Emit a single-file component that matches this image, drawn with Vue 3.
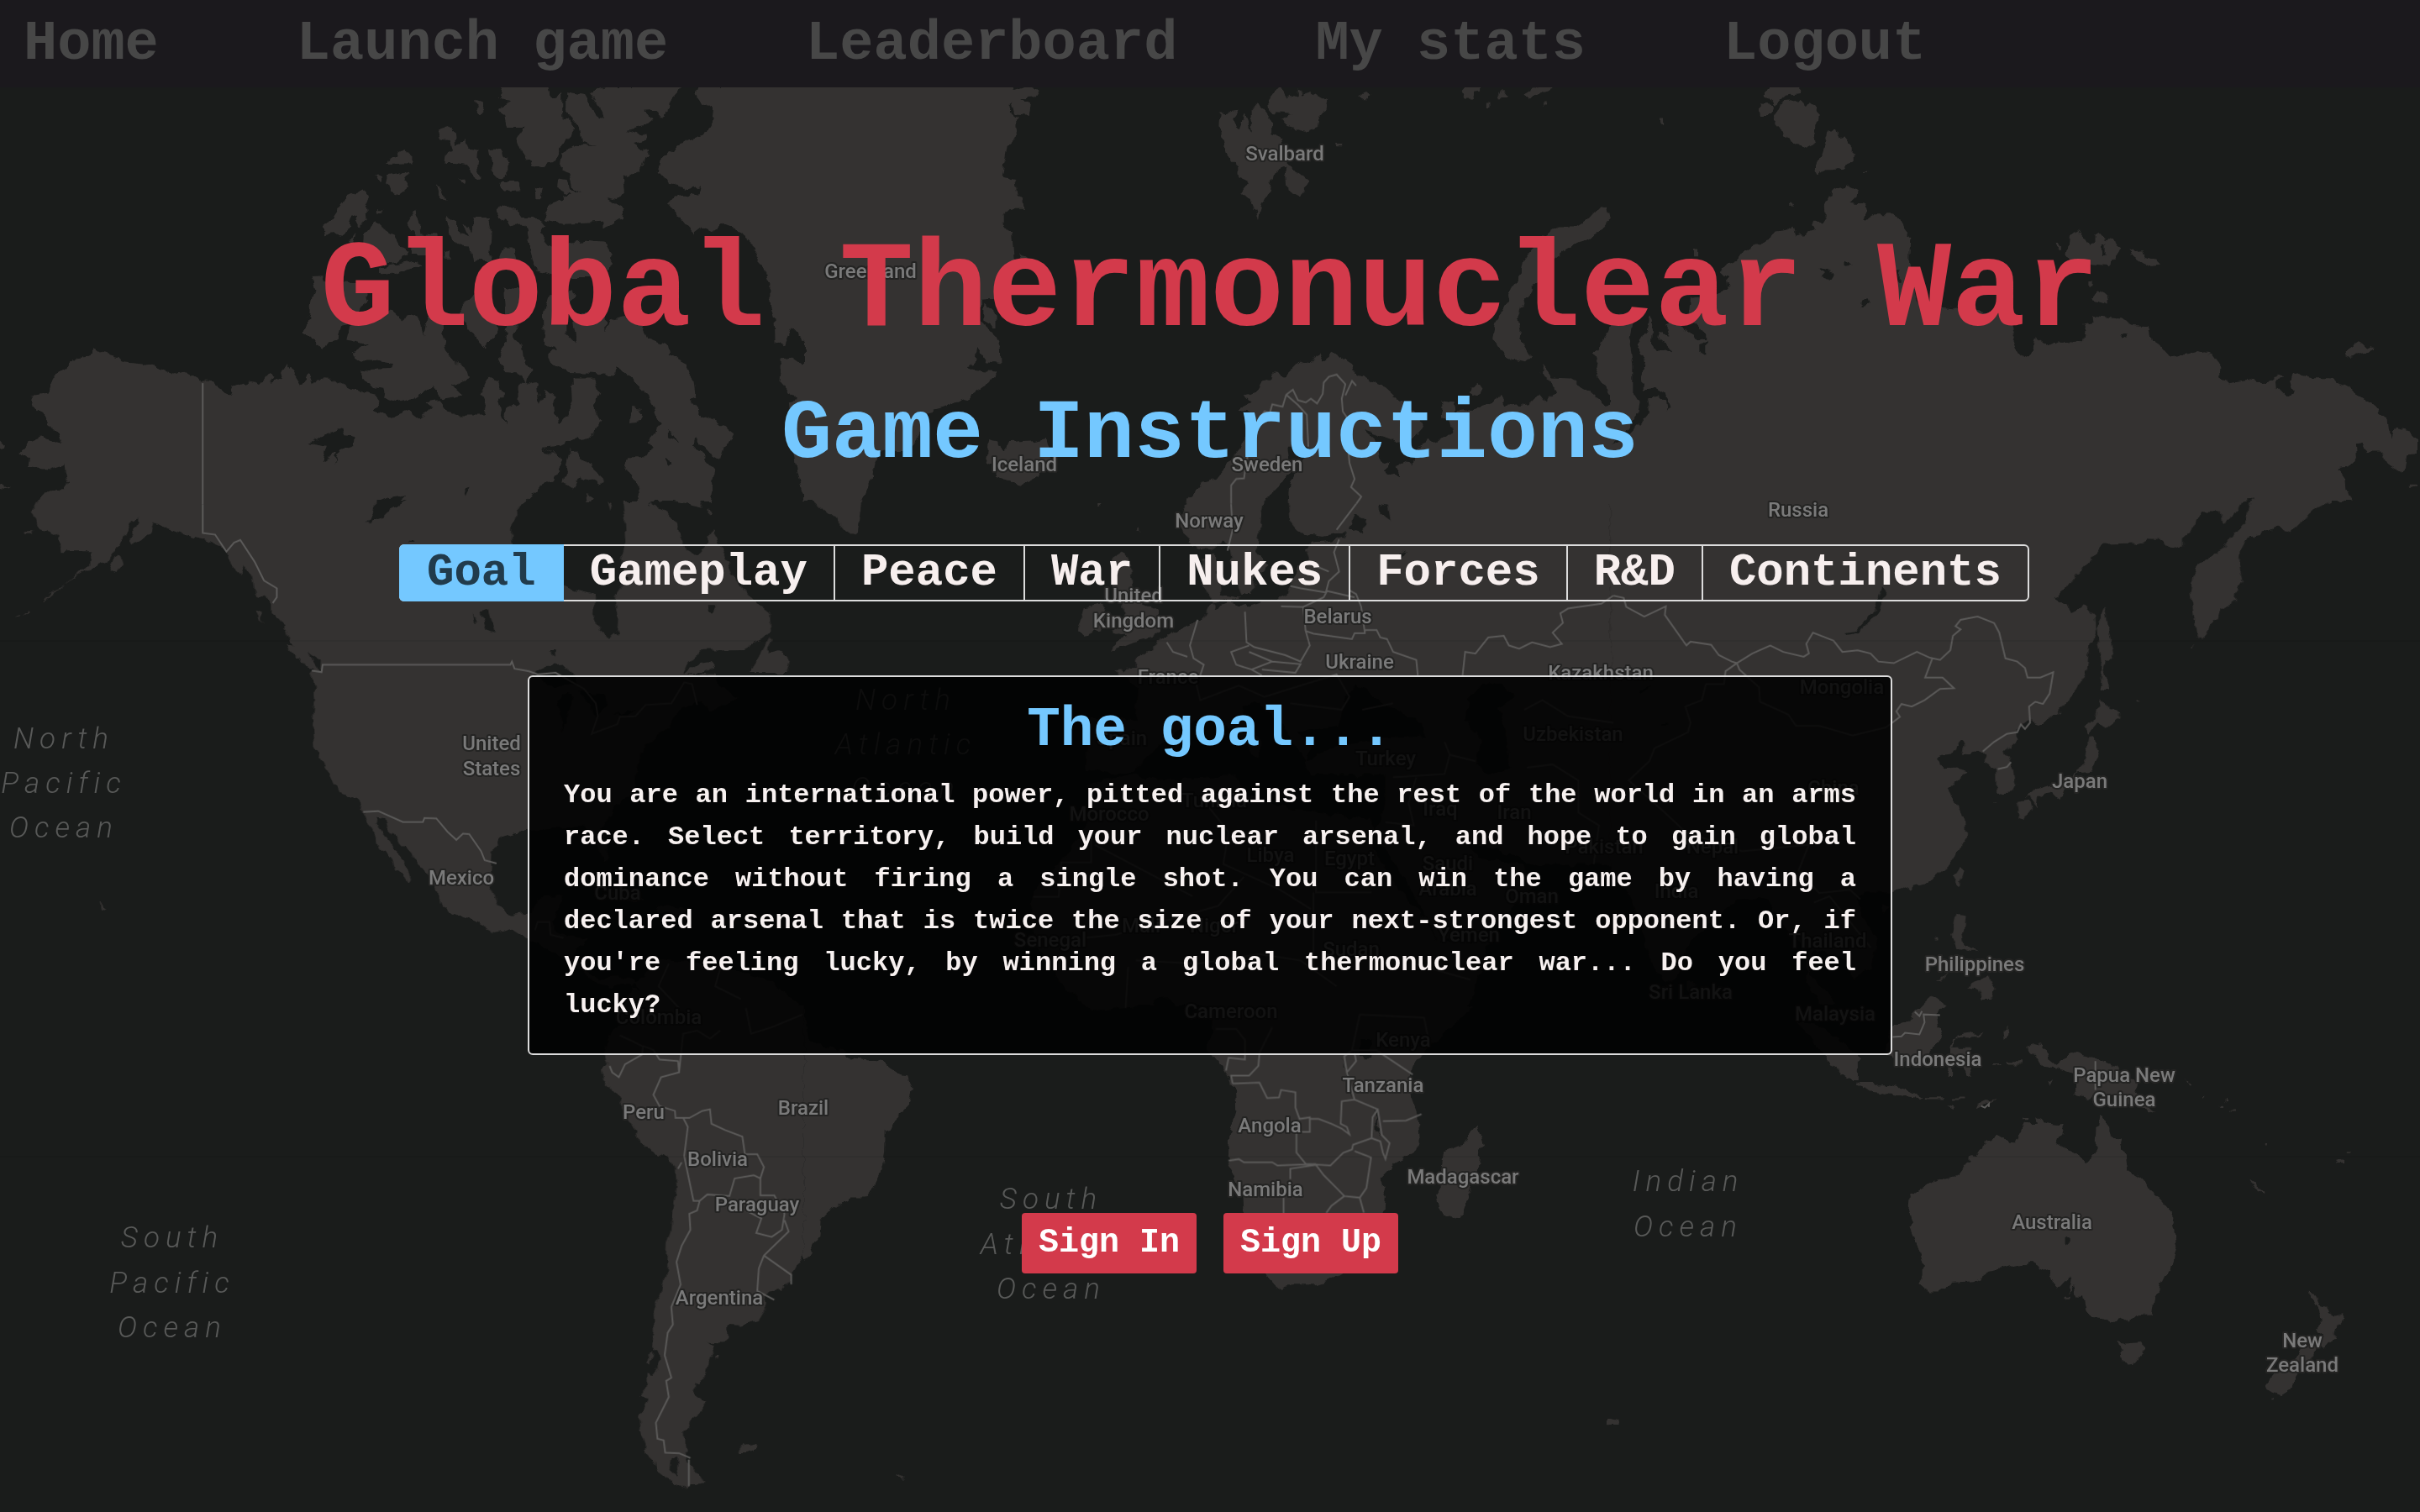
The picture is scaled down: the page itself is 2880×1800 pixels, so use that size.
<script setup>
import { ref, computed } from 'vue'

const navLinks = ['Home', 'Launch game', 'Leaderboard', 'My stats', 'Logout']
const tabs = ['Goal', 'Gameplay', 'Peace', 'War', 'Nukes', 'Forces', 'R&D', 'Continents']
const activeTab = ref('Goal')

const sections = {
  Goal: {
    heading: 'The goal...',
    text: "You are an international power, pitted against the rest of the world in an arms race. Select territory, build your nuclear arsenal, and hope to gain global dominance without firing a single shot. You can win the game by having a declared arsenal that is twice the size of your next-strongest opponent. Or, if you're feeling lucky, by winning a global thermonuclear war... Do you feel lucky?"
  }
}
const section = computed(() => sections[activeTab.value] ?? sections.Goal)

// World map, split in a 3 x 3 grid of tiles; every tile has its own 1568-unit coordinate space.
const tiles = [
  {
    col: 0, row: 0,
    land: `M985 272L975 310L998 322L975 345L985 370L990 405L1025 405L1010 440L1020 480L1040 525L1060 528L1078 515L1092 470L1110 440L1124 410L1112 380L1098 375V290L1088 315L1075 318L1070 272Z
    M1106 295L1140 305L1165 370L1183 378L1168 340L1150 295L1188 272H1332L1320 300L1308 320L1306 360L1292 373L1278 350L1258 352L1275 380L1260 400L1225 412L1260 430L1262 445L1240 455L1263 480L1250 540L1215 560L1218 600L1205 630L1185 622L1202 640L1218 660L1210 690L1180 720V700L1100 705L1060 690L1070 650L1090 630L1112 612L1088 590L1090 565L1105 570L1115 600L1140 610L1120 595L1112 545L1095 535L1100 480L1120 462L1165 465L1135 455L1130 400L1106 360Z
    M1362 272L1355 300L1365 325L1395 345L1392 380L1375 430L1335 450L1290 500L1285 540L1305 575L1340 600L1368 588L1365 612L1320 618L1305 645L1325 680L1340 710L1355 735L1372 715L1390 730L1410 705L1435 720L1450 745L1475 780L1472 810L1490 840L1500 890L1500 950L1510 1000L1512 1075L1530 1085L1545 1030L1568 1070V272Z
    M1520 1125L1545 1120L1568 1145V1250L1555 1255L1535 1215L1518 1200L1520 1160Z M1540 1260L1568 1250V1550L1555 1480L1548 1400Z
    M930 318L942 325L945 350L937 365L930 340Z M858 415L875 405L890 425L892 460L908 440L915 470L935 475L932 520L942 560L930 570L912 520L890 515L868 515L870 485L885 475L880 445L860 440Z
    M790 475L806 492V518L760 520L765 500Z M735 550L748 560L745 578Z M760 555L800 543L788 570L797 590L778 614L765 605L758 575Z
    M955 470L978 475L992 515V555L975 565L962 545L960 510Z M980 575L1012 575L1015 600L985 603L978 590Z M1045 590L1060 598L1055 625L1046 625Z M852 580L865 600L873 635L860 625Z M897 568L912 566L908 582Z M738 662h12v8h-12z
    M710 600L722 615L715 645L718 690L705 712L698 690L690 675L675 740L655 735L637 740L633 710L650 690L680 620Z M698 730L690 770L680 770Z
    M735 695L755 725L770 740L782 775L800 790L770 830L720 820L710 782L712 740Z M812 665L820 700L822 735L855 738L857 800H805L808 735L795 705Z M868 790h12v25h-12z
    M872 682L890 700L900 738L915 742L905 700L922 730L925 685L955 685L960 720L958 790L955 820L925 822L920 775L895 772L880 735Z
    M972 655L990 645L1010 660L1020 685L1050 685L1065 715L1055 735L1070 770L1100 785L1112 765L1150 755L1180 760L1195 800L1190 850L1160 870L1100 870L1045 850L1035 780L1025 710L1000 710L975 685Z
    M985 775L1005 775L1012 820L1010 850L980 840L976 815Z M745 840L810 820L825 830L770 865L745 860Z
    M612 870L635 868L640 885L715 890L720 930L700 985L690 1010L668 1020L662 1065L645 1070L632 1100L612 1065L594 1040L608 980L610 940L618 915Z
    M700 985L750 985L762 972L790 1010L800 985L822 1000L828 1060L835 1000L850 960L862 985L865 1050L872 1100L890 1135L915 1165L918 1185L885 1210L905 1240L865 1250L845 1210L810 1245L775 1258L755 1245L750 1220L730 1215L705 1170L720 1158L765 1155L770 1140L740 1130L700 1130L692 1110L720 1080L680 1065L690 1000Z
    M895 985L940 890L975 985L970 1050L945 1088L925 1045Z M985 900L1020 910L1050 905L1030 985L1012 1010L1000 1050L1020 1080L1025 1130L1038 1155L1030 1195L1015 1170L985 1165L975 1130L985 1080L990 1030Z
    M1060 990L1070 930L1120 915L1108 985L1108 1050L1125 1078L1118 1020L1115 985L1180 985L1182 1040L1190 1005L1225 992L1250 1005L1262 1055L1300 1080L1305 1110L1340 1140L1345 1170L1355 1190L1358 1240L1345 1250L1370 1300L1410 1330L1433 1360L1425 1385L1412 1400L1405 1440L1385 1420L1355 1370L1350 1390L1395 1470L1393 1500L1388 1568H1370L1340 1510L1375 1568H1250L1245 1520L1230 1480L1215 1450L1225 1430L1265 1430L1275 1400L1265 1380L1290 1330L1280 1290L1265 1240L1235 1190L1205 1150L1200 1175L1155 1170L1110 1168L1075 1135L1070 1110L1085 1095L1062 1080Z
    M190 1088L205 1105L240 1120L245 1135L290 1142L340 1172L365 1165L395 1192L420 1195L425 1218L452 1238L458 1215L490 1195L510 1205L530 1168L540 1175L530 1200L550 1180L565 1142L590 1208L605 1170L612 1208L625 1185L650 1190L690 1220L735 1238L745 1260L730 1285L770 1305L800 1285L820 1310L845 1275L830 1260L860 1255L880 1300L945 1300L950 1265L940 1230L955 1180L975 1195L985 1235L975 1260L985 1325L990 1280L1012 1260V1215L1030 1190L1050 1210L1055 1265L1065 1220L1080 1240L1085 1295L1095 1325L1108 1300L1120 1260L1118 1185L1160 1185L1170 1230L1160 1270L1172 1320L1150 1375L1125 1370L1095 1395L1060 1400L1100 1440L1080 1500L1055 1520L1027 1568H80L90 1535L130 1535L135 1500L130 1455L100 1470L60 1460L62 1435L45 1415L60 1385L85 1368L127 1390L120 1355L98 1330L95 1310L65 1268L68 1243L100 1235L110 1180L150 1122L180 1118Z
    M1100 1510L1115 1400L1140 1440L1180 1500L1170 1515L1135 1490L1120 1530Z M1232 1275L1252 1280L1250 1320L1230 1325Z M1145 1545L1162 1550L1155 1568H1140Z M0 1365L15 1390L0 1410Z M0 1510L28 1530L0 1525Z`,
    water: `M603 1385L670 1342L675 1365L695 1370L693 1395L670 1405L655 1445L660 1415L630 1445L640 1395Z M905 1525L918 1520L910 1550Z M745 1568L760 1558L795 1550L780 1568Z M1296 1435L1312 1450L1300 1460Z M1305 1345L1325 1385L1305 1370Z M1060 1400L1082 1425L1065 1420Z`,
    borders: 'M394 1192V1568'
  },
  {
    col: 1, row: 0,
    land: `M0 272H405L408 290L435 275L458 290L450 310L420 312L440 330L435 365L408 362L402 325L400 360L412 375L413 435L395 460L385 560L410 570L415 620L425 625L427 655L400 655L385 680L385 710L405 730L410 830L395 870L400 910L390 935L345 940L340 1000L370 1050L382 1090L383 1140L355 1135L335 1090L333 1125L320 1155L375 1165L355 1205L320 1245L265 1280L240 1290L230 1340L205 1410L150 1413L135 1450L130 1500L110 1568H0Z
    M420 795L437 815L425 822Z M350 950L375 990L375 1028L350 1005Z
    M808 360L845 352L835 375L845 410L857 362L870 430V350L880 330L895 350L910 390V430L930 440L940 500L935 530L912 545L905 600L890 640L882 685L870 640L850 610L865 575L845 560L843 530L825 500L815 440L806 400Z M935 505L960 545L980 570L965 620L940 600Z
    M925 272L938 310L945 300L960 308V280L968 308L985 290L1018 320L1015 350L1000 380L998 405L975 420L940 405L925 375L950 360L905 355L903 320Z M1080 310L1092 293L1102 300L1090 320Z M1036 455h8v8h-8z
    M1280 290L1290 272H1315V292L1300 295L1302 315L1285 315Z M1358 288L1368 308L1350 310Z M1400 300L1425 275L1468 272L1430 300L1410 318Z M1436 328h8v8h-8z M1326 328h6v12h-6z
    M1545 655L1560 652L1565 690L1550 725L1480 785L1455 820L1430 880L1400 940L1388 1000L1392 1060L1415 1120L1405 1135L1375 1128L1350 1090L1338 1060L1345 1010L1360 970L1375 900L1395 860L1400 820L1430 750L1465 715L1500 715L1525 690Z
    M360 1375L375 1380L388 1410L400 1385L450 1380L470 1372L478 1400L480 1440L455 1490L420 1520L395 1500L370 1495L375 1460L352 1450L355 1420Z
    M1000 1105L1010 1130L1030 1105L1065 1140L1068 1165L1095 1190L1130 1215L1165 1265L1200 1320L1205 1340L1185 1375L1150 1380L1090 1345L1110 1375L1120 1440L1140 1450L1125 1470L1160 1498L1148 1465L1165 1440L1185 1458L1190 1410L1215 1370L1230 1385L1260 1350L1255 1320L1240 1300L1238 1255L1262 1260L1265 1290L1290 1285L1340 1258L1355 1240L1365 1270L1412 1260L1428 1235L1440 1260L1460 1230L1455 1200L1432 1170L1435 1145L1455 1185L1490 1188L1520 1215L1560 1270L1568 1265V1568H942L945 1510L970 1440L985 1400H940L945 1470L925 1520L895 1568H745L775 1510L800 1500L830 1440L850 1400L860 1340L870 1290L840 1285L870 1260L858 1240L880 1230L890 1200L920 1165L935 1180L965 1130L985 1140Z
    M1298 1210L1310 1202L1320 1225L1305 1245L1295 1235Z M1560 1050L1568 1020V1240L1550 1200L1540 1180L1545 1150L1535 1110Z`,
    water: '',
    borders: `M825 1568V1510L835 1490L850 1488L855 1430L875 1340L880 1300L890 1280L900 1285L905 1258L925 1265L932 1228L945 1212L955 1245L970 1252L980 1240L992 1255L1003 1225L1005 1190L1015 1172L1030 1165L1047 1195L1040 1240L1042 1280L1055 1310L1050 1360L1055 1440L1065 1490L1058 1515L1078 1545L1068 1568 M932 1228L955 1260L972 1290L975 1390 M1047 1230L1060 1185L1068 1200`
  },
  {
    col: 2, row: 0,
    land: `M315 272H368V300L340 308L325 330L318 330L298 300Z M290 330L318 335L312 366L292 366Z M335 325L372 316L378 350L388 330L402 345L400 390L397 430L400 455L380 470L350 445L335 435L330 400L318 380Z
    M437 403L445 440L455 435L470 470V515L440 535L415 537L400 556L396 545L412 470L422 420Z M95 380h8v9h-8z M165 783h5v20h-5z M348 642h6v8h-6z M492 538h8v3h-8z
    M457 584L480 600L478 620L465 640L495 645L498 665L490 692L505 690L508 675H548L566 690L570 720L582 745L580 830L600 960L650 965L780 985L785 1030L778 1050L790 1100L808 1124L818 1100L828 1055L850 1085L868 1070L920 1075L922 1040L917 1015L940 1008L938 990L985 998L1015 1022L1045 1025L1050 1065L1070 1085L1088 1120L1140 1103L1170 1112L1183 1140V1185L1200 1200L1240 1192L1275 1200L1295 1172L1307 1185L1293 1190L1295 1215L1312 1243L1328 1225L1320 1195L1325 1168L1360 1182L1397 1182L1430 1210L1465 1250L1510 1310L1513 1350L1520 1370L1525 1340L1555 1350L1568 1370V1418L1547 1420L1543 1470L1535 1478L1510 1450L1498 1415L1470 1415L1460 1385L1450 1390L1452 1430L1435 1458L1413 1465L1428 1500L1430 1530L1440 1568H0V1390L30 1370L60 1320L75 1290L72 1245L95 1235L105 1255L107 1290L115 1270L105 1235L85 1215L62 1225L60 1170L67 1135L52 1080L70 1035L75 985L82 1020L80 1080L85 1092L120 1107L112 1090L92 1060L95 1040L115 1050L105 1020L120 1010L150 1030L165 1060L187 1065L172 1085V1105L185 1118V1050L172 1025L150 1010L155 935L185 930L228 910L225 870L215 855L225 835L245 820L260 785L310 755L315 735L345 728L355 715L360 740L380 735L397 722L392 700L410 700L418 680L416 650L430 605Z
    M0 985L45 990L37 1080L43 1140V1230L55 1260L50 1300L30 1350L0 1390Z
    M908 722L922 745L932 770L940 765V740L948 732L960 752L975 755L992 775L985 800L970 832L955 830L925 825L905 838L892 820L886 800L892 745Z M1008 783L1020 792L1035 790L1042 805L1063 815V835L1045 840L1025 820L1008 800Z M867 768h5v18h-5z M930 883h7v18h-7z M950 910L968 935V955L935 940Z
    M1455 1072L1478 1090L1468 1105L1432 1118L1430 1100Z M1553 1515h15v8h-15z`,
    water: `M408 842L438 855L428 880L410 870Z M455 815L468 835L455 838Z M990 1055L1002 1045L1004 1060L995 1065Z M1228 1562L1248 1556L1244 1568H1230Z M553 850h10v30h-10z M485 960L500 935L508 955Z M957 765h6v45h-6z`,
    borders: ''
  },
  {
    col: 0, row: 1,
    land: `M78 0L68 30L80 80L120 110L125 155L183 155L180 195L150 235L100 300L88 312L100 290L140 250L175 215L215 190L240 130L260 60L275 50L275 70L255 120L265 135L300 100L305 65L330 85L365 105L400 118L445 150L455 200L475 230L480 195L495 235L500 290L520 300L533 315L533 350L545 365L562 400L570 440L580 450L562 450L600 515L615 520L608 535L615 570L617 620L612 700L615 765L637 820L655 880L665 905L700 930L715 980L735 1040L740 1080L765 1105L772 1140L790 1160L800 1185L804 1175L790 1120L775 1085L755 1040L735 1000L738 982L755 985L760 1020L805 1100L808 1115L835 1155L845 1190L858 1215L860 1250L885 1285L920 1300L972 1345L1000 1332L1028 1360L1070 1395L1130 1450L1160 1500L1190 1510L1215 1495L1250 1520L1240 1490L1205 1480L1160 1485L1125 1430L1120 1390L1145 1360L1090 1345L1080 1310L1100 1225L1050 1230L1040 1280L1000 1288L975 1260L958 1190L962 1090L975 1050L1005 1028L1070 1020L1140 1010L1165 1060L1180 1130L1190 1110L1175 1020L1200 950L1240 890L1245 820L1260 760L1310 700L1320 650L1370 620L1385 655L1440 610L1400 570L1390 540L1335 533L1345 500L1370 462L1450 460L1490 425L1505 400L1503 350L1480 320L1450 270L1430 230L1408 150L1388 88L1380 130L1360 170L1340 150L1325 100L1320 60L1285 20L1265 0H1215L1220 60L1222 130L1210 180L1225 240L1200 300L1208 370L1205 410L1190 428L1170 400L1160 350L1162 290L1100 265L1060 230L1020 190L1000 130L1000 80L1010 30L1027 0Z
    M1220 1568L1240 1500L1290 1425L1400 1445L1500 1490L1560 1568Z M1462 533L1475 500L1500 425L1505 440L1495 470L1520 460L1540 495L1535 533Z M1335 533L1365 505L1385 500L1395 515L1375 533Z
    M52 92h18v12h-18z M240 170L245 190L230 222L218 215L225 185Z M60 338L62 345L52 352Z M35 362L46 348L44 360Z M500 335L512 345L515 382Z M200 1250L212 1262L203 1272Z M1150 1190L1210 1210L1262 1245L1225 1248Z M1280 1255L1340 1270L1330 1285L1285 1280Z M1188 0L1197 5L1193 30Z M1315 0H1365L1372 20Z M1383 28h5v12h-5z`,
    water: `M735 0H795L762 25L750 50L715 67L730 40Z M940 345L955 340L962 375L968 410L950 400Z M923 355L932 365L928 382Z M1380 325L1400 325L1395 338L1382 338Z M1075 468L1084 468L1080 487Z M1040 535L1070 512L1095 508L1110 520L1130 575L1070 570Z M1090 620L1110 590L1120 605L1100 715Z M1130 590L1180 600L1185 630L1165 670Z M1195 665L1240 650L1230 665Z M603 470L630 500L628 530Z M800 122h10v6h-10z`,
    borders: `M394 0V90L418 95L440 148L455 120L467 112L495 180L513 238L538 262V290L530 308 M606 518L625 523L627 500H992L995 490L1000 512L1028 520L1045 530L1080 525L1135 575L1158 620L1162 660L1150 715L1200 685L1205 662L1235 660L1255 625L1305 620L1330 555L1345 560L1355 625 M706 958L735 955L783 989H822L825 977L848 978L870 1020L887 1045L900 1025L912 1027L935 1080L942 1108L965 1118 M1040 1325L1045 1300H1068L1070 1340L1095 1350 M1400 1445L1390 1500L1440 1540 M1300 1430L1280 1500L1320 1568`
  },
  {
    col: 1, row: 1,
    land: `M20 0L40 30L75 75L92 108L103 100L110 40L113 0Z M745 0L732 50L735 100L765 145L795 150L815 120L825 140L835 230L850 290L870 290L875 240L905 200L880 150L890 40L895 0Z M775 180L800 160L805 240L812 290L850 300L800 330L775 260Z
    M942 0L945 60L965 100L1010 110L1055 95L1050 115L1030 120L985 130L975 150L985 190L960 200L950 240L940 290L900 310L860 330L820 305L790 320L775 370L730 400L690 430L680 460L645 485V520L605 525L650 580L645 680L555 670L548 830L600 850L640 840L690 760L740 700L780 670L830 700L880 800L890 760L850 640L880 620L930 700L975 810L985 760L960 720L1040 700L1050 620L1075 570L1100 600L1140 640L1200 690L1210 730L1100 740L1040 760L970 810L985 850L1130 850L1130 930L1120 1000L1100 1060L1150 1200L1220 1320L1230 1370L1330 1330L1420 1200L1400 1130L1310 1110L1280 1050L1340 1080L1420 1130L1568 1130V0Z
    M600 180L620 160L635 190L640 270L660 320L690 340L690 380L680 425L640 440L597 468L610 430L630 420L600 405L625 350L600 260Z M545 330L580 320L590 350L575 400L545 418L532 400Z M648 78h4v14h-4z M572 5h5v10h-5z
    M550 880L640 850L700 870L840 850L860 920L960 960L1100 985L1120 1060L1190 1230L1230 1370L1330 1370L1320 1450L1290 1568H545L500 1500L460 1400L440 1300L445 1220L520 1080L560 980Z`,
    water: `M1290 620L1320 570L1360 565L1380 610L1350 640L1365 720L1370 830L1330 850L1305 820L1315 740L1285 680Z M1118 10L1135 15L1140 60L1120 40Z M1070 40L1095 60L1085 100L1060 85Z M1160 155L1172 160L1162 180Z M680 1548L710 1545L720 1568H680Z`,
    borders: `M825 0L828 80L818 145 M1068 0L1030 80 M1035 110L1025 150L1035 210L1015 240L1010 270L1065 290 M985 190L1015 210 M940 255L960 262L1010 275L1005 290L965 320L922 318 M1055 268L1068 280L1078 320L1085 400 M852 335L855 430L870 445L930 470L960 490L978 440L970 395L985 403L1060 420L1065 402L1085 402V392L1108 392L1115 415L1128 420L1140 460L1185 485L1188 533 M965 320L970 395 M860 440L825 460L835 500L865 515L905 490L860 460 M760 360L745 440L752 480L772 500L765 533 M700 430L712 460L740 475 M865 515L885 533 M905 490L960 498L950 525L885 515 M1275 533L1280 460L1300 465L1325 415L1355 410L1365 440L1385 450L1410 430L1445 445L1468 435L1450 400L1470 370L1465 340L1480 325L1545 310L1568 285
    M755 545L765 610L840 565L890 600L950 570L1030 530L1055 600L1040 640L940 620 M1080 640L1140 620 M1140 850L1240 840L1250 780L1300 800 M1240 740L1250 780 M1185 850L1170 930L1180 1000L1125 990 M1395 640L1430 610L1480 660L1568 680 M1400 820L1450 810L1500 860L1500 960L1540 1000L1530 1120 M780 940L820 1020L810 1120L920 1200L980 1260 M990 985V1208H1098 M553 1030V1115H495L490 1222H440 M985 1208V1440 M850 1160L800 1250L690 1300L600 1340L540 1350 M560 1060L750 1220 M640 1420L760 1430L880 1400L960 1420L1030 1500 M625 1440L620 1568 M1180 1430L1290 1480`
  },
  {
    col: 2, row: 1,
    land: `M0 0H1228L1215 40L1190 72L1185 30L1150 30L1130 90L1112 115V138L1085 145L1070 120L1045 118L1020 132L955 135L935 180L905 230L885 275L862 300L890 320L895 345L920 325L940 360L942 400L932 440L928 520L905 590L865 665L835 690L815 680L790 710V740L765 775L780 820L787 880L780 905L750 910L748 830L730 815V785L712 770L695 785L683 790L690 755L682 742L660 785L640 790L633 805L650 835L668 830L695 840L655 895L675 950L688 990L690 1050L660 1130L620 1185L575 1200L543 1220L500 1215L480 1230L490 1290L520 1380L505 1450L470 1490L465 1440L435 1410L395 1395L385 1470L430 1540L440 1568H410L380 1500L385 1400L340 1330L330 1290L300 1240L260 1230L200 1300L150 1380L130 1480L110 1500L80 1440L60 1330L40 1240L0 1150Z
    M1242 0H1400L1365 30L1320 98L1295 78L1265 100L1240 105L1225 150L1222 200L1228 250L1210 290L1208 320L1185 335L1180 365L1165 380L1160 410L1145 435L1138 410L1128 290L1132 235L1145 195L1180 160L1205 115L1235 60Z
    M960 325L968 400L978 490L962 490L958 530L968 580L952 590L955 500L943 400L950 370Z M950 615L970 645L992 655L990 675L965 705L945 690L930 718L922 700L942 675Z M930 725L940 740L948 790L935 840L910 845L885 890L880 910L870 930L855 905L830 920L828 950L815 915L805 925L825 895L860 880L905 850L925 800Z M790 935L812 930L818 960L805 990L795 985Z
    M680 1135L687 1150L677 1200L666 1170Z M672 1285L692 1290L690 1330L682 1350L685 1380L715 1400L700 1400L670 1385L662 1350Z M700 1500L735 1480L748 1520L740 1550L720 1550L715 1520L695 1515Z M660 1460L640 1495L634 1495Z M605 1568L625 1538L650 1568Z M1136 445L1130 465L1127 463Z M1022 620h7v5h-7z M630 1353h8v10h-8z M745 937h5v4h-5z M525 1255l20 10l-15 20z M150 1490l15 20l-15 20z`,
    water: `M528 270L535 285L520 350L480 410L458 418L455 410L475 405L510 345Z M60 605L58 590L78 573Z M95 700L110 690L112 700Z`,
    borders: `M0 285L20 292L25 320L60 350L102 318L100 345L142 440L150 428L190 438L205 470L230 490L240 495L270 465L305 440L330 460L370 475L380 465L375 435L388 400L428 425L445 460L475 455L500 465L515 490L545 495L590 460L615 478L635 485L655 455L660 410L675 390L665 380L675 360L708 350L740 370L750 400L762 480L785 490L800 510L805 540L830 540L855 523L848 590L835 622L820 615L808 630L810 680L800 700L792 685L785 710L765 715L740 740L718 770 M620 480L606 540L640 540L662 573L635 575L605 610L580 630L560 622L550 645L557 662L530 695L465 720L400 690L355 690L340 655L285 615L283 570L245 515L240 495L218 520L215 560L180 560L172 610L140 630L150 680L145 710L80 760L70 800L30 860L100 960L140 1020L250 1080L380 1060L360 1140L400 1210L460 1200L480 1230 M747 825L765 818L773 803 M390 1240L420 1220L500 1380`
  },
  {
    col: 0, row: 2,
    land: `M1190 0L1210 60L1190 95L1180 150L1185 180L1175 200L1178 235L1195 260L1210 300L1225 350L1240 390L1243 415L1258 440L1295 470L1318 505L1320 570L1313 640L1310 700L1302 740L1300 830L1292 890L1275 950L1277 1010L1272 1060L1285 1080L1283 1130L1275 1150L1265 1145V1175L1250 1215L1265 1220L1258 1255L1248 1275L1250 1325L1260 1370L1258 1390L1275 1415L1278 1445L1300 1475L1340 1508L1350 1490L1380 1485L1355 1450L1340 1410L1335 1370L1332 1330L1345 1315L1352 1285L1375 1255V1230L1352 1205L1355 1180L1375 1165L1383 1110L1390 1090L1383 1050L1412 1052L1420 1040V993L1440 995L1480 980L1493 945L1490 910L1500 890L1525 885L1545 840L1568 775V0Z
    M1440 1390L1450 1370L1475 1362L1478 1380L1458 1390Z M1268 1075L1275 1070L1270 1115L1265 1110Z M1394 1090h8v8h-8z`,
    water: 'M1310 1415L1325 1405V1430L1318 1460L1308 1445Z',
    borders: `M1185 180L1190 200L1203 215L1215 175L1248 145L1250 120L1225 100L1205 85 M1250 118L1270 130L1282 160L1318 165L1320 200L1285 215L1270 270L1282 305L1312 320L1313 342H1340L1365 320L1380 315L1383 360L1410 380L1443 400L1448 455H1472L1485 495L1478 530L1465 520L1428 530L1418 585L1375 580L1360 600L1348 600L1335 500L1330 460L1337 370L1328 342 M1320 200L1328 80L1355 70L1380 95L1400 70 M1478 530V583H1505L1525 640L1520 690L1500 712L1470 700L1480 655L1450 630 M1525 660L1533 695L1485 770L1475 810L1472 880L1505 908 M1485 770L1538 830V860 M1325 480L1318 500 M1360 600L1355 630L1340 640L1342 690L1325 740L1315 790L1323 860L1305 930L1308 985L1298 1010L1292 1080L1305 1150L1295 1160L1300 1210L1275 1290L1278 1340L1290 1345L1293 1383L1320 1385L1342 1400 M1339 1405V1488 M1450 0L1460 80L1500 60L1560 20`
  },
  {
    col: 1, row: 2,
    land: `M0 0L10 110L80 145L88 162L150 172L190 218L203 220L211 260L203 310L185 340L170 385L158 392L157 460L148 525L130 580L118 600L90 600L55 630L32 670L30 720L10 770L0 795Z
    M545 0H655L568 20Z M790 0L795 40L785 140L812 190L828 230L838 270L840 330L825 410L822 490L840 545L853 590L855 640L880 740L905 825L900 845L920 882L945 868L995 868L1020 855L1060 815L1090 740L1128 640L1130 600L1120 540L1150 490L1190 455L1197 420L1192 330L1178 270L1182 200L1215 130L1250 80L1300 0Z
    M1308 367L1322 440L1312 450L1310 510L1298 560L1280 650L1260 660L1245 655L1235 630L1230 590L1245 550L1240 510L1245 455L1280 432Z M178 1458L195 1470V1480Z M1563 1285h5v20h-5z`,
    water: 'M1080 110H1105L1101 160H1083Z M1110 310L1118 400L1124 410L1112 395Z M1045 160L1068 290L1060 260Z',
    borders: `M828 235L880 232L895 280L918 278L922 255L950 262V310L958 345L978 340V385H960 M978 345L995 345L1020 360L1040 375L1055 393L1050 370L1038 360L1040 290L1065 285L1110 315L1100 340L1098 405L1062 425L1060 440L1043 450L1018 490L970 485L952 450V385 M820 475L840 470L850 480H905L915 490L990 485 M940 532V500L990 488L1005 520L1030 560L1045 585L1075 590L1088 560L1097 465L1065 445 M927 590V640 M1045 585L1020 615L1010 637 M1075 590L1083 637 M1120 352L1165 350L1195 330 M1098 405L1115 415L1120 450L1125 470L1133 420L1118 395L1110 315 M828 235L825 210L860 210L878 180L880 140L905 60 M1065 285L1050 200L1045 150L1060 132H1108L1178 207 M815 195L820 155L852 160V100L835 65H795 M1050 200L1068 165L1065 140 M1060 132L1075 20L1200 30L1210 110`
  },
  {
    col: 2, row: 2,
    land: `M400 60L480 150L487 170L480 175V230L462 230L430 190L410 145L385 90L360 50Z M480 238L510 238L515 250L545 247L575 260L605 285L600 290L510 272L478 250Z M612 288h35v6h-35z M665 289h25v5h-25z M710 325L715 305L735 295L752 290L730 310Z M653 310L672 318L668 325Z
    M605 0H650L632 25L635 65L645 90L630 130L600 185L537 160L535 110L550 60L580 45Z M660 140L665 100L690 88L715 95L728 82L720 100H670L665 130L705 130L690 150L702 222L688 215L680 180L665 190V225H658Z M765 75l8 -10l2 30l-8 12z M745 180h12v5h-12z M770 176h32v8h-32z M850 232l5 -5v22z
    M808 130L825 120L845 128L850 165L865 185L895 142L935 160L985 190L1000 235L1025 240L1020 265L1040 305L1060 333L1025 318L990 290L950 275L925 290L898 280L905 262L905 215L870 195L838 190L830 160Z M1030 225L1065 215L1055 240Z M1118 230l12 18l-5 2z M1183 308h8v6h-8z M1150 282h5v4h-5z M1195 293h4v8h-4z M1206 328h6v5h-6z
    M825 348L850 365L882 370L868 430L905 465L928 487L943 460L945 370L955 340L968 375L972 408L990 420L1000 470L1003 510L1038 545L1050 585L1065 600L1095 655L1093 690L1101 740L1092 810L1078 840L1057 910L1052 963L1025 965L1008 990L988 970L970 988L955 975L935 972L923 945L918 905L905 903L900 870L890 895L896 840L870 885L850 830L820 803L800 802L740 825L710 860L662 865L640 890L617 890L600 865L607 845V805L598 750L582 690L588 675L580 640L583 585L592 587L625 550L678 527L695 490V468L710 470L722 440L750 403L772 422L787 424L805 368L828 365Z
    M798 350h14v6h-14z M883 909h10v5h-10z M986 1045L1000 1052L1031 1048L1032 1080L1018 1118L1005 1120L995 1100Z
    M1358 893L1368 895L1378 935L1390 940L1395 960L1408 968L1425 962L1422 985L1408 1005L1405 1030L1388 1063L1380 1050L1385 1025L1367 1005L1380 985L1377 950Z M1345 1065L1370 1062L1365 1090L1340 1135L1328 1165L1322 1195L1303 1213L1275 1195L1272 1185L1295 1140L1338 1085Z M1286 1220h4v6h-4z M1242 545L1272 580L1268 586L1245 558Z M1412 482h14v12h-14z M1432 458h10v4h-10z M1272 430h5v8h-5z M0 1285L15 1292L12 1305L0 1305Z`,
    water: 'M883 718L893 730V745L883 742Z',
    borders: 'M543 90L560 88L567 77L595 82L605 45L603 20L635 22 M586 12L595 25L600 10 M937 165V255 M715 305L722 310L730 298V308'
  }
]

// [text, centre x, baseline y]
const countries = [
  ['Svalbard', 1529, 191], ['Greenland', 1036, 331], ['Iceland', 1219, 561], ['Sweden', 1508, 561],
  ['Russia', 2140, 615], ['Norway', 1439, 628], ['United', 1349, 717], ['Kingdom', 1349, 747],
  ['Belarus', 1592, 742], ['Ukraine', 1618, 796], ['Kazakhstan', 1905, 809], ['France', 1390, 814],
  ['Mongolia', 2192, 826], ['United', 585, 893], ['States', 585, 923], ['Mexico', 549, 1053],
  ['Cuba', 735, 1071], ['Spain', 1335, 887], ['Turkey', 1649, 911], ['Uzbekistan', 1872, 882],
  ['Tunisia', 1445, 961], ['Morocco', 1320, 977], ['Iraq', 1714, 971], ['Iran', 1802, 975],
  ['Libya', 1512, 1026], ['Egypt', 1606, 1030], ['Saudi', 1723, 1036], ['Arabia', 1723, 1066],
  ['Oman', 1823, 1075], ['Pakistan', 1909, 1016], ['Nepal', 2038, 1016], ['India', 1995, 1069],
  ['China', 2182, 946], ['Mali', 1358, 1110], ['Niger', 1445, 1110], ['Senegal', 1250, 1127],
  ['Sudan', 1608, 1138], ['Yemen', 1748, 1121], ['Thailand', 2175, 1128], ['Sri Lanka', 2012, 1189],
  ['Japan', 2475, 938], ['Philippines', 2350, 1156], ['Malaysia', 2184, 1215], ['Indonesia', 2306, 1269],
  ['Papua New', 2528, 1288], ['Guinea', 2528, 1317], ['Australia', 2442, 1463], ['New', 2740, 1604],
  ['Zealand', 2740, 1633], ['Colombia', 784, 1219], ['Peru', 766, 1332], ['Brazil', 956, 1327],
  ['Bolivia', 854, 1388], ['Paraguay', 901, 1442], ['Argentina', 856, 1553], ['Cameroon', 1465, 1212],
  ['Kenya', 1670, 1246], ['Tanzania', 1646, 1300], ['Angola', 1511, 1348], ['Namibia', 1506, 1424],
  ['Madagascar', 1741, 1409]
]

const oceans = [
  ['North', 76, 891], ['Pacific', 76, 944], ['Ocean', 76, 997],
  ['North', 1078, 845], ['Atlantic', 1078, 898], ['Ocean', 1078, 950],
  ['South', 205, 1485], ['Pacific', 205, 1539], ['Ocean', 205, 1592],
  ['South', 1251, 1439], ['Atlantic', 1251, 1493], ['Ocean', 1251, 1546],
  ['Indian', 2009, 1418], ['Ocean', 2009, 1472]
]
</script>

<template>
  <div class="page">
    <svg class="map" viewBox="0 0 2880 1800" preserveAspectRatio="xMidYMid slice" aria-hidden="true">
      <defs>
        <!-- roughens the coastlines -->
        <filter id="coast" filterUnits="userSpaceOnUse" x="-20" y="-20" width="2920" height="1840">
          <feTurbulence type="fractalNoise" baseFrequency="0.09" numOctaves="2" seed="4" result="noise" />
          <feDisplacementMap in="SourceGraphic" in2="noise" scale="14" xChannelSelector="R" yChannelSelector="G" color-interpolation-filters="sRGB" />
        </filter>
      </defs>
      <g filter="url(#coast)">
        <g transform="scale(0.612245 0.382653)">
          <g v-for="t in tiles" :key="`${t.col}-${t.row}`" :transform="`translate(${t.col * 1568} ${t.row * 1568})`">
            <path class="land" :d="t.land" />
            <path class="water" :d="t.water" />
          </g>
        </g>
      </g>
      <g transform="scale(0.612245 0.382653)">
        <g v-for="t in tiles" :key="`${t.col}-${t.row}`" :transform="`translate(${t.col * 1568} ${t.row * 1568})`">
          <path class="border" :d="t.borders" />
        </g>
      </g>
      <path class="seam" d="M0 763H2880M0 1377H2880" />
      <text v-for="([name, x, y], i) in oceans" :key="`o${i}`" class="ocean" :x="x" :y="y">{{ name }}</text>
      <text v-for="([name, x, y], i) in countries" :key="`c${i}`" class="country" :x="x" :y="y">{{ name }}</text>
    </svg>

    <nav class="nav">
      <a v-for="link in navLinks" :key="link" href="#">{{ link }}</a>
    </nav>

    <main class="content">
      <h1>Global Thermonuclear War</h1>
      <h2>Game Instructions</h2>

      <div class="tabs" role="tablist">
        <button
          v-for="tab in tabs"
          :key="tab"
          type="button"
          role="tab"
          :aria-selected="tab === activeTab"
          :class="{ active: tab === activeTab }"
          @click="activeTab = tab"
        >{{ tab }}</button>
      </div>

      <section class="card">
        <h3>{{ section.heading }}</h3>
        <p>{{ section.text }}</p>
      </section>

      <div class="actions">
        <button type="button">Sign In</button>
        <button type="button">Sign Up</button>
      </div>
    </main>
  </div>
</template>

<style>
body {
  margin: 0;
  background: #1a1c1b;
}
</style>

<style scoped>
.page {
  position: relative;
  min-height: 100vh;
  overflow: hidden;
  background: #1a1c1b;
  font-family: "Liberation Mono", "Courier New", monospace;
  font-weight: 700;
}

.map {
  position: absolute;
  inset: 0;
  width: 100%;
  height: 100%;
}

.land {
  fill: #343231;
}

.water {
  fill: #1a1c1b;
}

.border {
  fill: none;
  stroke: #5c5b5a;
  stroke-width: 2px;
  vector-effect: non-scaling-stroke;
}

.seam {
  stroke: rgba(0, 0, 0, 0.06);
  stroke-width: 2px;
}

.country {
  font: 500 24px Roboto, sans-serif;
  text-anchor: middle;
  fill: #7a7a7a;
  stroke: #242423;
  stroke-width: 4px;
  stroke-linejoin: round;
  paint-order: stroke;
}

.ocean {
  font: italic 300 35px Roboto, sans-serif;
  letter-spacing: 7px;
  text-anchor: middle;
  fill: #585958;
}

.nav {
  position: relative;
  display: flex;
  align-items: center;
  gap: 164px;
  height: 104px;
  padding: 0 28px;
  background: #1b191d;
}

.nav a {
  color: #474747;
  font-size: 67px;
  line-height: 80px;
  text-decoration: none;
  white-space: nowrap;
}

.content {
  position: relative;
  display: flex;
  flex-direction: column;
  align-items: center;
  padding: 164px 24px 64px;
}

h1,
h2,
h3,
p {
  margin: 0;
}

h1 {
  color: #d33a4b;
  font-size: 147px;
  line-height: 160px;
  text-align: center;
}

h2 {
  margin-top: 30px;
  color: #74c8ff;
  font-size: 100px;
  line-height: 120px;
  text-align: center;
}

.tabs {
  display: flex;
  margin-top: 70px;
  margin-left: 10px;
  border: 2px solid #dcdcdc;
  border-radius: 6px;
}

.tabs button {
  box-sizing: border-box;
  height: 64px;
  padding: 0 31px;
  border: 0;
  border-left: 2px solid #dcdcdc;
  background: transparent;
  color: #f7efee;
  font: inherit;
  font-size: 54px;
  line-height: 64px;
  cursor: pointer;
}

.tabs button:first-child {
  border-left: 0;
}

.tabs button.active {
  height: 68px;
  margin: -2px 0 -2px -2px;
  padding: 0 33px;
  border-radius: 6px 0 0 6px;
  background: #74c8ff;
  color: #213b4c;
}

.tabs button.active + button {
  border-left: 0;
}

.card {
  box-sizing: border-box;
  width: 100%;
  max-width: 1624px;
  margin-top: 88px;
  padding: 24px 41px 32px;
  border: 2px solid #dcdcdc;
  border-radius: 6px;
  background: rgba(0, 0, 0, 0.85);
}

h3 {
  color: #74c8ff;
  font-size: 66px;
  line-height: 80px;
  text-align: center;
}

p {
  margin-top: 12px;
  color: #f7f1f0;
  font-size: 32px;
  line-height: 50px;
  text-align: justify;
}

.actions {
  display: flex;
  gap: 32px;
  margin-top: 188px;
}

.actions button {
  height: 72px;
  padding: 0 20px;
  border: 0;
  border-radius: 4px;
  background: #d33a4b;
  color: #fff;
  font: inherit;
  font-size: 40px;
  line-height: 72px;
  cursor: pointer;
}
</style>
